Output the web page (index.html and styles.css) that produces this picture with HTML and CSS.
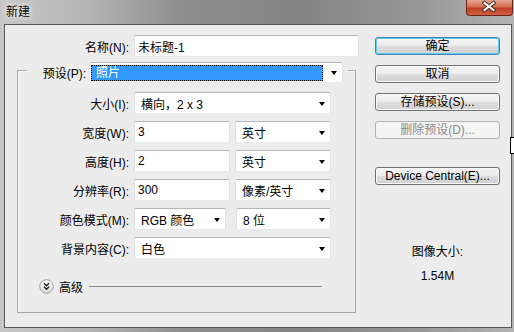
FILE: index.html
```html
<!DOCTYPE html>
<html lang="zh">

<head>
    <meta charset="utf-8">
    <title>新建</title>
    <link rel="stylesheet" href="styles.css">
</head>

<body>
    <div class="window">
        <div class="titlebar">
            <span class="title">新建</span>
            <div class="close">
                <svg width="47" height="16" viewBox="0 0 47 16">
                    <path d="M18.5 4 L27.5 11 M27.5 4 L18.5 11" stroke="#4a2a22" stroke-width="4" stroke-linecap="square" fill="none" />
                    <path d="M18.5 4 L27.5 11 M27.5 4 L18.5 11" stroke="#fff" stroke-width="2" stroke-linecap="square" fill="none" />
                </svg>
            </div>
        </div>

        <div class="client">
            <div class="form">
                <div class="row name-row">
                    <span class="lbl">名称(N):</span>
                    <div class="field input w-name">未标题-1</div>
                </div>

                <div class="group">
                    <div class="group-head">
                        <span class="head-lbl">预设(P):</span>
                        <div class="field select preset">
                            <span class="sel-hl">照片</span>
                            <i class="arrow"></i>
                        </div>
                    </div>

                    <div class="rows">
                        <div class="row">
                            <span class="lbl">大小(I):</span>
                            <div class="field select w-full">横向，2 x 3<i class="arrow"></i></div>
                        </div>
                        <div class="row">
                            <span class="lbl">宽度(W):</span>
                            <div class="field input w-half">3</div>
                            <div class="field select w-half gap5">英寸<i class="arrow"></i></div>
                        </div>
                        <div class="row">
                            <span class="lbl">高度(H):</span>
                            <div class="field input w-half">2</div>
                            <div class="field select w-half gap5">英寸<i class="arrow"></i></div>
                        </div>
                        <div class="row">
                            <span class="lbl">分辨率(R):</span>
                            <div class="field input w-half">300</div>
                            <div class="field select w-half gap5">像素/英寸<i class="arrow"></i></div>
                        </div>
                        <div class="row">
                            <span class="lbl">颜色模式(M):</span>
                            <div class="field select w-mode">RGB 颜色<i class="arrow"></i></div>
                            <div class="field select w-bits gap10">8 位<i class="arrow"></i></div>
                        </div>
                        <div class="row">
                            <span class="lbl">背景内容(C):</span>
                            <div class="field select w-full">白色<i class="arrow"></i></div>
                        </div>
                    </div>

                    <div class="advanced">
                        <svg class="chevron" width="15" height="15" viewBox="0 0 15 15">
                            <defs>
                                <linearGradient id="cg" x1="0" y1="0" x2="0" y2="1">
                                    <stop offset="0" stop-color="#ffffff" />
                                    <stop offset="1" stop-color="#d8d8d8" />
                                </linearGradient>
                            </defs>
                            <circle cx="7.5" cy="7.5" r="6.8" fill="url(#cg)" stroke="#9c9c9c" />
                            <path d="M5 4.3 L7.5 6.8 L10 4.3 M5 7.8 L7.5 10.3 L10 7.8" stroke="#222" stroke-width="1.4" fill="none" />
                        </svg>
                        <span class="adv-lbl">高级</span>
                        <span class="adv-line"></span>
                    </div>
                </div>
            </div>

            <div class="side">
                <div class="btn default">确定</div>
                <div class="btn">取消</div>
                <div class="btn">存储预设(S)...</div>
                <div class="btn disabled">删除预设(D)...</div>
                <div class="btn device">Device Central(E)...</div>

                <div class="size-info">
                    <p>图像大小:</p>
                    <p>1.54M</p>
                </div>
            </div>
        </div>

        <span class="cursor"></span>
    </div>
</body>

</html>
```

FILE: styles.css
```css
body {
    margin: 0;
    font-family: "Liberation Sans", "Noto Sans CJK SC", sans-serif;
    font-size: 12px;
    color: #000;
}

.window {
    position: relative;
    width: 514px;
    height: 332px;
    overflow: hidden;
    background: linear-gradient(90deg, #c6c6c6 0, #b4b4b4 90px, #8e8e8e 180px, #848484 300px, #989898 420px, #b2b2b2 514px);
}

.titlebar {
    height: 24px;
    display: flex;
    justify-content: space-between;
    align-items: flex-start;
}

.title {
    padding: 5px 0 0 6px;
    line-height: 14px;
    text-shadow: 0 0 4px #fff, 0 0 8px #fff;
}

.close {
    width: 47px;
    height: 16px;
    margin-right: 1px;
    box-sizing: border-box;
    border: 1px solid #6b2418;
    border-top: 0;
    border-radius: 0 0 4px 4px;
    background: linear-gradient(#e7a48f, #d66c50 45%, #c13d20 55%, #cf6247);
}

.close svg {
    display: block;
    margin-top: -1px;
    margin-left: -1px;
}

.client {
    display: flex;
    margin: 0 2px 0 4px;
    height: 304px;
    box-sizing: border-box;
    border: 1px solid #575757;
    background-color: #ececec;
}

/* left part */

.form {
    width: 370px;
    flex: none;
    box-sizing: border-box;
    padding: 10px 0 0 12px;
}

.row {
    display: flex;
    align-items: center;
    height: 22px;
}

.lbl {
    width: 116px;
    padding-right: 5px;
    box-sizing: border-box;
    text-align: right;
    white-space: nowrap;
}

.name-row .lbl {
    width: 117px;
}

.field {
    position: relative;
    display: flex;
    align-items: center;
    height: 22px;
    box-sizing: border-box;
    border: 1px solid;
    border-color: #b4b6bb #dfe2e7 #e6e9ee #dcdfe4;
    border-radius: 2px;
    background-color: #fff;
    white-space: nowrap;
}

.input {
    padding-left: 3px;
}

.select {
    padding-left: 6px;
}

.arrow {
    position: absolute;
    right: 5px;
    top: 9px;
    width: 0;
    height: 0;
    border-left: 3.5px solid transparent;
    border-right: 3.5px solid transparent;
    border-top: 4px solid #000;
}

.w-name {
    width: 225px;
}

.w-full {
    width: 197px;
}

.w-half {
    width: 96px;
}

.w-mode {
    width: 92px;
}

.w-bits {
    width: 95px;
}

.gap5 {
    margin-left: 5px;
}

.gap10 {
    margin-left: 10px;
}

.group {
    width: 339px;
    margin-top: 13px;
    padding-bottom: 18px;
    box-sizing: border-box;
    border: 1px solid #a6a6a6;
    box-shadow: inset 1px 1px 0 #fff;
}

.group-head {
    display: flex;
    align-items: center;
    width: 321px;
    height: 21px;
    margin: -9px 0 0 9px;
    background-color: #ececec;
}

.head-lbl {
    width: 62px;
    padding-right: 3px;
    box-sizing: border-box;
    text-align: right;
}

.preset {
    width: 254px;
    height: 21px;
    padding-left: 1px;
}

.sel-hl {
    width: 232px;
    height: 16px;
    box-sizing: border-box;
    padding-left: 4px;
    line-height: 14px;
    border: 1px dotted #000;
    background-color: #3399ff;
    color: #fff;
}

.preset .arrow {
    top: 8px;
}

.rows {
    display: flex;
    flex-direction: column;
    gap: 7px;
    margin-top: 9px;
}

.advanced {
    display: flex;
    align-items: center;
    height: 15px;
    margin: 20px 0 0 21px;
}

.chevron {
    display: block;
}

.adv-lbl {
    margin-left: 5px;
}

.adv-line {
    width: 233px;
    height: 1px;
    margin-left: 6px;
    background-color: #8a8a8a;
}

/* right part */

.side {
    width: 125px;
    padding-top: 12px;
    display: flex;
    flex-direction: column;
}

.btn {
    height: 18px;
    margin-bottom: 10px;
    box-sizing: border-box;
    border: 1px solid #707070;
    border-radius: 3px;
    background: linear-gradient(#f4f4f4 0, #ececec 50%, #dedede 50%, #d0d0d0 100%);
    box-shadow: inset 0 0 0 1px #fafafa;
    text-align: center;
    line-height: 16px;
    white-space: nowrap;
}

.default {
    border-color: #3c7fb1;
    box-shadow: inset 0 0 0 1px #5fd0f4;
}

.disabled {
    border-color: #adb2b5;
    background: #f4f4f4;
    box-shadow: none;
    color: #8a8a8a;
}

.device {
    margin-top: 18px;
}

.size-info {
    margin-top: 45px;
    text-align: center;
}

.size-info p {
    margin: 0;
    line-height: 24px;
}

.cursor {
    position: absolute;
    left: 510px;
    top: 137px;
    width: 3px;
    height: 15px;
    border: 1px solid #000;
    border-right: 0;
    background-color: #fff;
}
```
